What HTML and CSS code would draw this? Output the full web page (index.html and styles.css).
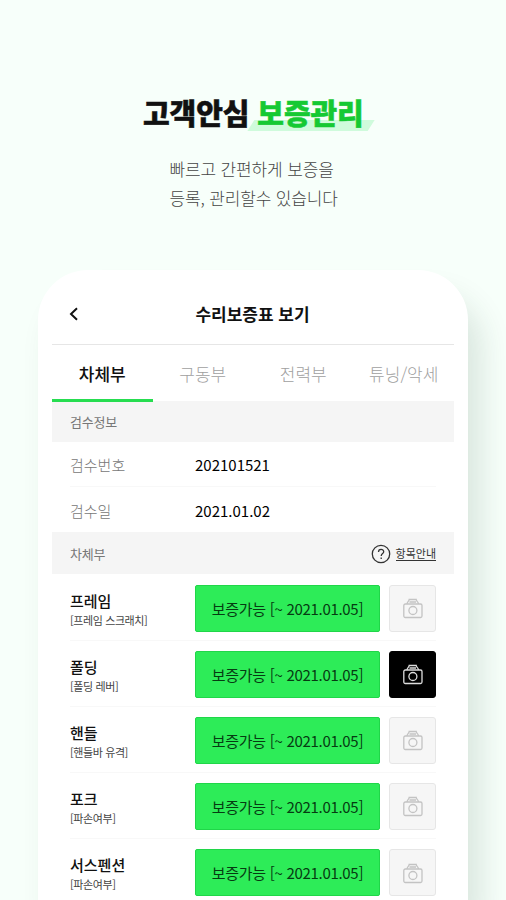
FILE: index.html
```html
<!DOCTYPE html>
<html lang="ko">
<head>
<meta charset="utf-8">
<title>고객안심 보증관리</title>
<link rel="stylesheet" href="styles.css">
</head>
<body>
<svg class="defs" width="0" height="0">
  <symbol id="camera" viewBox="0 0 22 22">
    <path d="M5 7C5 5 7 4.500 7.200 2.500h7c.2 2 2.300 2.500 2.300 4.500M7.500 5h6.500"/>
    <rect x="1.800" y="7" width="18.200" height="13.500" rx="1.500"/>
    <circle cx="10.900" cy="13.500" r="4"/>
  </symbol>
</svg>
<header class="intro">
  <h1 class="title">고객안심 <span class="accent">보증관리</span></h1>
  <p class="lead">빠르고 간편하게 보증을<br>등록, 관리할수 있습니다</p>
</header>
<main class="phone">
  <div class="bar">
    <svg class="back" viewBox="0 0 10 14"><path d="M8 1.200 2 7l6 5.800"/></svg>
    <h2 class="bar-title">수리보증표 보기</h2>
  </div>
  <nav class="tabs">
    <span class="tab active">차체부</span>
    <span class="tab">구동부</span>
    <span class="tab">전력부</span>
    <span class="tab">튜닝/악세</span>
  </nav>
  <div class="section">검수정보</div>
  <dl class="info">
    <div class="info-row"><dt>검수번호</dt><dd>202101521</dd></div>
    <div class="info-row"><dt>검수일</dt><dd>2021.01.02</dd></div>
  </dl>
  <div class="section parts-head">
    <span>차체부</span>
    <span class="help">
      <svg class="help-icon" viewBox="0 0 20 20"><circle cx="10" cy="10" r="8.700"/><path d="M7.500 8c0-3.500 5.200-3.500 5.200-.300 0 2-2.500 1.800-2.500 4.300M10.200 13.500v1.500"/></svg>
      <span class="help-label">항목안내</span>
    </span>
  </div>
  <ul class="parts">
    <li class="part">
      <div class="name"><strong>프레임</strong><small>[프레임 스크래치]</small></div>
      <span class="status">보증가능 [~ 2021.01.05]</span>
      <span class="photo"><svg><use href="#camera"/></svg></span>
    </li>
    <li class="part">
      <div class="name"><strong>폴딩</strong><small>[폴딩 레버]</small></div>
      <span class="status">보증가능 [~ 2021.01.05]</span>
      <span class="photo on"><svg><use href="#camera"/></svg></span>
    </li>
    <li class="part">
      <div class="name"><strong>핸들</strong><small>[핸들바 유격]</small></div>
      <span class="status">보증가능 [~ 2021.01.05]</span>
      <span class="photo"><svg><use href="#camera"/></svg></span>
    </li>
    <li class="part">
      <div class="name"><strong>포크</strong><small>[파손여부]</small></div>
      <span class="status">보증가능 [~ 2021.01.05]</span>
      <span class="photo"><svg><use href="#camera"/></svg></span>
    </li>
    <li class="part">
      <div class="name"><strong>서스펜션</strong><small>[파손여부]</small></div>
      <span class="status">보증가능 [~ 2021.01.05]</span>
      <span class="photo"><svg><use href="#camera"/></svg></span>
    </li>
  </ul>
</main>
</body>
</html>
```
FILE: styles.css
```css
* { box-sizing: border-box; margin: 0; padding: 0; }
body {
  width: 506px;
  height: 900px;
  overflow: hidden;
  background: #f7fffa;
  font-family: "Noto Sans CJK KR", sans-serif;
  color: #111;
}
.defs { position: absolute; }
svg { fill: none; stroke: currentColor; display: block; }
.intro { height: 270px; padding-top: 91px; }
.title {
  margin-left: 143px;
  font-size: 29px;
  line-height: 42px;
  font-weight: 900;
  letter-spacing: -0.1px;
  -webkit-text-stroke: 0.5px currentColor;
  white-space: nowrap;
}
.accent { position: relative; z-index: 0; color: #15c933; }
.accent::before {
  content: "";
  position: absolute;
  z-index: -1;
  left: -10px;
  right: -11px;
  bottom: 2px;
  height: 11px;
  background: #cffbdc;
  clip-path: polygon(7px 0, 100% 0, calc(100% - 7px) 100%, 0 100%);
}
.lead {
  margin: 21px 0 0 169.500px;
  font-size: 17px;
  line-height: 29px;
  font-weight: 300;
  letter-spacing: -0.15px;
  color: #444;
  white-space: nowrap;
}
.phone {
  width: 430px;
  height: 630px;
  overflow: hidden;
  margin-left: 38px;
  padding: 0 14px;
  border-radius: 50px 50px 0 0;
  background: #fff;
  box-shadow: 14px 26px 30px rgba(30, 70, 50, .13);
}
.bar {
  display: flex;
  align-items: center;
  height: 75px;
  padding: 13px 18px 0 17px;
  border-bottom: 1px solid #e6e6e6;
}
.back { width: 10px; height: 14px; stroke-width: 2; }
.bar-title { flex: 1; margin-right: 10px; text-align: center; font-size: 17px; font-weight: 700; line-height: 24px; }
.tabs { display: grid; grid-template-columns: repeat(4, 1fr); height: 56px; }
.tab {
  display: flex;
  align-items: center;
  justify-content: center;
  height: 57px;
  font-size: 17px;
  font-weight: 300;
  color: #a0a0a0;
  white-space: nowrap;
}
.tab.active { position: relative; color: #111; font-weight: 500; border-bottom: 3px solid #26dd50; padding-top: 2px; }
.section {
  display: flex;
  align-items: center;
  justify-content: space-between;
  height: 41px;
  padding: 0 18px;
  background: #f5f5f5;
  font-size: 13px;
  letter-spacing: -0.2px;
  color: #777;
}
.info { padding: 0 18px; }
.info-row { display: flex; align-items: center; height: 45px; padding-top: 1px; font-size: 15px; }
.info-row:first-child { border-bottom: 1px solid #f8f8f8; }
.info dt { width: 125px; color: #777; font-weight: 300; }
.info dd { color: #000; font-weight: 400; }
.parts-head { height: 42px; }
.help { display: flex; align-items: center; gap: 5px; padding-top: 2px; color: #333; }
.help-icon { width: 20px; height: 20px; stroke-width: 1.3; }
.help-label { font-size: 11px; line-height: 13px; letter-spacing: 0; border-bottom: 1px solid #333; }
.parts { list-style: none; padding: 1px 18px 0; }
.part { display: flex; align-items: center; height: 66px; border-bottom: 1px solid #f8f8f8; padding-top: 1px; }
.part:last-child { height: 54px; align-items: flex-start; padding-top: 10px; border: 0; }
.name { width: 125px; padding-top: 4px; display: flex; flex-direction: column; white-space: nowrap; }
.name strong { font-size: 15px; line-height: 20px; font-weight: 500; }
.name small { font-size: 11px; line-height: 19px; letter-spacing: -0.4px; color: #444; }
.part:last-child .name { padding-top: 6px; }
.status {
  display: flex;
  align-items: center;
  justify-content: center;
  width: 185px;
  height: 47px;
  border: 1px solid #20d649;
  border-radius: 2px;
  background: #2dec58;
  color: #063b12;
  font-size: 15px;
  letter-spacing: -0.3px;
  white-space: nowrap;
}
.photo {
  display: flex;
  align-items: center;
  justify-content: center;
  width: 47px;
  height: 47px;
  margin-left: 9px;
  border: 1px solid #e6e6e6;
  border-radius: 3px;
  background: #f6f6f6;
  color: #c3c3c3;
}
.photo svg { width: 22px; height: 22px; stroke-width: 1.3; }
.photo.on { background: #000; border-color: #000; color: #ddd; }
```
